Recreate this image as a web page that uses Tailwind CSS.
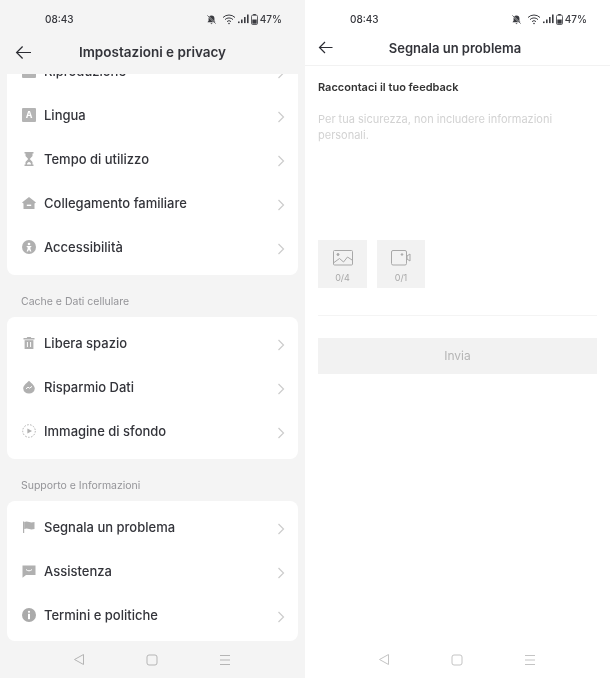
<!DOCTYPE html>
<html lang="en">
<head>
    <meta charset="UTF-8">
    <meta name="viewport" content="width=device-width, initial-scale=1.0">
    <title>Impostazioni e privacy</title>
    <script src="https://cdn.jsdelivr.net/npm/@tailwindcss/browser@4"></script>
</head>
<body class="bg-white font-['Inter',sans-serif] text-[#33343a]">
    <div class="w-[610px] h-[678px] flex overflow-hidden blur-[0.5px]">

        <!-- Settings screen -->
        <section class="w-[305px] h-full bg-[#f4f4f4] flex flex-col">
            <!-- Status bar -->
            <div class="h-[38px] pl-[45px] pr-[23px] flex items-center justify-between">
                <span class="text-[10px] font-medium text-[#33343a]">08:43</span>
                <div class="flex items-center gap-[2px] text-[#3a3b40]">
                    <svg class="w-[11px] h-[11px]" viewBox="0 0 12 12" fill="currentColor"><path d="M6 1.5a3.2 3.2 0 0 0-3.2 3.2v2.6L1.6 9h8.8L9.2 7.3V4.7A3.2 3.2 0 0 0 6 1.5zM4.8 10h2.4L6 11.2z"/><path d="M1.5 1.5l9 9" stroke="#f4f4f4" stroke-width="1.4"/><path d="M1.5 1.5l9 9" stroke="currentColor" stroke-width=".8"/></svg>
                    <svg class="w-[14px] h-[11px] ml-[3px]" viewBox="0 0 14 11" fill="none" stroke="currentColor" stroke-width="1"><path d="M1 3.5a8.5 8.5 0 0 1 12 0M3 5.6a5.6 5.6 0 0 1 8 0M5 7.6a2.8 2.8 0 0 1 4 0"/><circle cx="7" cy="9.5" r=".8" fill="currentColor" stroke="none"/></svg>
                    <svg class="w-[11px] h-[10px]" viewBox="0 0 11 10" fill="currentColor"><rect x="0" y="7.5" width="1.6" height="1.6"/><rect x="3" y="5.5" width="1.6" height="3.6"/><rect x="6" y="3" width="1.6" height="6.1"/><rect x="9" y="0.5" width="1.6" height="8.6"/></svg>
                    <svg class="w-[7px] h-[11px]" viewBox="0 0 7 11"><rect x=".5" y="1.2" width="6" height="9.3" rx="1.2" fill="none" stroke="currentColor" stroke-width=".8"/><rect x="2.2" y="0" width="2.6" height="1.2" fill="currentColor"/><rect x="1.3" y="5.5" width="4.4" height="4.2" fill="currentColor"/></svg>
                    <span class="text-[10px] font-medium">47%</span>
                </div>
            </div>
            <!-- Header -->
            <header class="h-[36px] relative flex items-center justify-center">
                <svg class="absolute left-[15px] top-[7px] w-[17px] h-[15px]" viewBox="0 0 17 15" fill="none" stroke="#2b2c33" stroke-width="1.2"><path d="M16 7.5H1.5M7.6 1.5l-6 6 6 6"/></svg>
                <h1 class="text-[13.5px] font-semibold -mt-[7px]">Impostazioni e privacy</h1>
            </header>

            <!-- Scrolled list -->
            <div class="flex-1 min-h-0 overflow-hidden px-[7px]">
                <div class="-mt-[25px] bg-white rounded-b-[8px] pb-[6px]">
                    <div class="h-[44px] pl-[15px] pr-[13px] flex items-center gap-[8px]">
                        <span class="w-[14px] h-[14px] bg-[#b4b4b4] rounded-[1px]"></span>
                        <span class="flex-1 pt-[2px] text-[13px] font-medium">Riproduzione</span>
                        <svg class="w-[8px] h-[12px] mt-[3px]" viewBox="0 0 8 12" fill="none" stroke="#cccccc" stroke-width="1.2"><path d="M1.5 1l5 5-5 5"/></svg>
                    </div>
                    <div class="h-[44px] pl-[15px] pr-[13px] flex items-center gap-[8px]">
                        <span class="w-[14px] h-[14px] flex items-center justify-center bg-[#b4b4b4] rounded-[1px] text-white text-[9px] font-bold">A</span>
                        <span class="flex-1 pt-[2px] text-[13px] font-medium">Lingua</span>
                        <svg class="w-[8px] h-[12px] mt-[3px]" viewBox="0 0 8 12" fill="none" stroke="#cccccc" stroke-width="1.2"><path d="M1.5 1l5 5-5 5"/></svg>
                    </div>
                    <div class="h-[44px] pl-[15px] pr-[13px] flex items-center gap-[8px]">
                        <svg class="w-[14px] h-[14px]" viewBox="0 0 14 14" fill="#b0b0b0"><path d="M2.5 0h9v1.6h-1V4L7.8 7l2.7 3v2.4h1V14h-9v-1.6h1V10l2.7-3-2.7-3V1.6h-1z"/><path d="M5 12.4c0-1.4 1-2.3 2-2.3s2 .9 2 2.3z" fill="#fff"/></svg>
                        <span class="flex-1 pt-[2px] text-[13px] font-medium">Tempo di utilizzo</span>
                        <svg class="w-[8px] h-[12px] mt-[3px]" viewBox="0 0 8 12" fill="none" stroke="#cccccc" stroke-width="1.2"><path d="M1.5 1l5 5-5 5"/></svg>
                    </div>
                    <div class="h-[44px] pl-[15px] pr-[13px] flex items-center gap-[8px]">
                        <svg class="w-[14px] h-[14px]" viewBox="0 0 14 14" fill="#b0b0b0"><path d="M7 1l7 5.4-1.5 1V13h-11V7.4L0 6.4z"/><rect x="4.8" y="8.6" width="4.4" height="1.4" fill="#fff"/></svg>
                        <span class="flex-1 pt-[2px] text-[13px] font-medium">Collegamento familiare</span>
                        <svg class="w-[8px] h-[12px] mt-[3px]" viewBox="0 0 8 12" fill="none" stroke="#cccccc" stroke-width="1.2"><path d="M1.5 1l5 5-5 5"/></svg>
                    </div>
                    <div class="h-[44px] pl-[15px] pr-[13px] flex items-center gap-[8px]">
                        <svg class="w-[14px] h-[14px]" viewBox="0 0 14 14"><circle cx="7" cy="7" r="7" fill="#b0b0b0"/><circle cx="7" cy="4" r="1.3" fill="#fff"/><path d="M4.2 6h5.6L8.4 7.4v1.4L9.4 11.4H8L7 9.4 6 11.4H4.6L5.6 8.8V7.4z" fill="#fff"/></svg>
                        <span class="flex-1 pt-[2px] text-[13px] font-medium">Accessibilità</span>
                        <svg class="w-[8px] h-[12px] mt-[3px]" viewBox="0 0 8 12" fill="none" stroke="#cccccc" stroke-width="1.2"><path d="M1.5 1l5 5-5 5"/></svg>
                    </div>
                </div>

                <h2 class="pt-[19px] pb-[7px] pl-[14px] text-[10.5px] leading-[16px] text-[#949498]">Cache e Dati cellulare</h2>
                <div class="bg-white rounded-[8px] pt-[4px] pb-[6px]">
                    <div class="h-[44px] pl-[15px] pr-[13px] flex items-center gap-[8px]">
                        <svg class="w-[14px] h-[14px]" viewBox="0 0 14 14" fill="#b0b0b0"><path d="M1.5 2h3.2l.6-1h3.4l.6 1h3.2v1.4h-11z"/><path d="M2.6 4.2h8.8V13H2.6z"/><path d="M5.4 6v5M8.6 6v5" stroke="#fff" stroke-width="1"/></svg>
                        <span class="flex-1 pt-[2px] text-[13px] font-medium">Libera spazio</span>
                        <svg class="w-[8px] h-[12px] mt-[3px]" viewBox="0 0 8 12" fill="none" stroke="#cccccc" stroke-width="1.2"><path d="M1.5 1l5 5-5 5"/></svg>
                    </div>
                    <div class="h-[44px] pl-[15px] pr-[13px] flex items-center gap-[8px]">
                        <svg class="w-[14px] h-[14px]" viewBox="0 0 14 14"><path d="M7 .8c1 1.300 5.800 4.400 5.800 7.600A5.600 5.600 0 0 1 7 13.600a5.600 5.600 0 0 1-5.800-5.200C1.200 5.200 6 2.100 7 .8z" fill="#b0b0b0"/><path d="M4 8.800l2-1.600 1.500 1 2.500-1.800" fill="none" stroke="#fff" stroke-width="1"/></svg>
                        <span class="flex-1 pt-[2px] text-[13px] font-medium">Risparmio Dati</span>
                        <svg class="w-[8px] h-[12px] mt-[3px]" viewBox="0 0 8 12" fill="none" stroke="#cccccc" stroke-width="1.2"><path d="M1.5 1l5 5-5 5"/></svg>
                    </div>
                    <div class="h-[44px] pl-[15px] pr-[13px] flex items-center gap-[8px]">
                        <svg class="w-[14px] h-[14px]" viewBox="0 0 14 14"><circle cx="7" cy="7" r="6.300" fill="none" stroke="#b0b0b0" stroke-width="1" stroke-dasharray="1.600 1.400"/><path d="M5.400 4.400L10 7l-4.600 2.600z" fill="#b0b0b0"/></svg>
                        <span class="flex-1 pt-[2px] text-[13px] font-medium">Immagine di sfondo</span>
                        <svg class="w-[8px] h-[12px] mt-[3px]" viewBox="0 0 8 12" fill="none" stroke="#cccccc" stroke-width="1.2"><path d="M1.5 1l5 5-5 5"/></svg>
                    </div>
                </div>

                <h2 class="pt-[19px] pb-[7px] pl-[14px] text-[10.5px] leading-[16px] text-[#949498]">Supporto e Informazioni</h2>
                <div class="bg-white rounded-[8px] pt-[4px] pb-[4px]">
                    <div class="h-[44px] pl-[15px] pr-[13px] flex items-center gap-[8px]">
                        <svg class="w-[14px] h-[14px]" viewBox="0 0 14 14" fill="#b0b0b0"><path d="M1 1.500h1.200V13H1z"/><path d="M2.200 2c2-.9 3.500-.6 5 0s3 .6 5.300 0v7c-2.300.6-3.800.6-5.300 0s-3-.9-5 0z"/></svg>
                        <span class="flex-1 pt-[2px] text-[13px] font-medium">Segnala un problema</span>
                        <svg class="w-[8px] h-[12px] mt-[3px]" viewBox="0 0 8 12" fill="none" stroke="#cccccc" stroke-width="1.2"><path d="M1.5 1l5 5-5 5"/></svg>
                    </div>
                    <div class="h-[44px] pl-[15px] pr-[13px] flex items-center gap-[8px]">
                        <svg class="w-[14px] h-[14px]" viewBox="0 0 14 14"><path d="M.5 1.500h13v9.500H4l-3.500 2.800z" fill="#b0b0b0"/><path d="M4 5.500c1.600 1.800 4.400 1.800 6 0" fill="none" stroke="#fff" stroke-width="1"/></svg>
                        <span class="flex-1 pt-[2px] text-[13px] font-medium">Assistenza</span>
                        <svg class="w-[8px] h-[12px] mt-[3px]" viewBox="0 0 8 12" fill="none" stroke="#cccccc" stroke-width="1.2"><path d="M1.5 1l5 5-5 5"/></svg>
                    </div>
                    <div class="h-[44px] pl-[15px] pr-[13px] flex items-center gap-[8px]">
                        <svg class="w-[14px] h-[14px]" viewBox="0 0 14 14"><circle cx="7" cy="7" r="7" fill="#aaaaaa"/><circle cx="7" cy="3.800" r="1.100" fill="#fff"/><rect x="6" y="5.800" width="2" height="5.400" fill="#fff"/></svg>
                        <span class="flex-1 pt-[2px] text-[13px] font-medium">Termini e politiche</span>
                        <svg class="w-[8px] h-[12px] mt-[3px]" viewBox="0 0 8 12" fill="none" stroke="#cccccc" stroke-width="1.2"><path d="M1.5 1l5 5-5 5"/></svg>
                    </div>
                </div>
            </div>

            <!-- Android nav -->
            <nav class="h-[37px] shrink-0 pl-[73px] pr-[74px] flex items-center justify-between">
                <svg class="w-[12px] h-[13px]" viewBox="0 0 12 13" fill="none" stroke="#b5b5b5"><path d="M10.500 1.500v10L1.500 6.500z"/></svg>
                <svg class="w-[12px] h-[12px]" viewBox="0 0 12 12" fill="none" stroke="#b5b5b5"><rect x="1" y="1" width="10" height="10" rx="2"/></svg>
                <svg class="w-[12px] h-[12px]" viewBox="0 0 12 12" fill="none" stroke="#b5b5b5"><path d="M1 1.500h10M1 6h10M1 10.500h10"/></svg>
            </nav>
        </section>

        <!-- Report screen -->
        <section class="w-[305px] h-full bg-white flex flex-col">
            <div class="h-[38px] pl-[45px] pr-[23px] flex items-center justify-between">
                <span class="text-[10px] font-medium text-[#33343a]">08:43</span>
                <div class="flex items-center gap-[2px] text-[#3a3b40]">
                    <svg class="w-[11px] h-[11px]" viewBox="0 0 12 12" fill="currentColor"><path d="M6 1.5a3.2 3.2 0 0 0-3.2 3.2v2.6L1.6 9h8.8L9.2 7.3V4.7A3.2 3.2 0 0 0 6 1.5zM4.8 10h2.4L6 11.2z"/><path d="M1.5 1.5l9 9" stroke="#fff" stroke-width="1.4"/><path d="M1.5 1.5l9 9" stroke="currentColor" stroke-width=".8"/></svg>
                    <svg class="w-[14px] h-[11px] ml-[3px]" viewBox="0 0 14 11" fill="none" stroke="currentColor" stroke-width="1"><path d="M1 3.5a8.5 8.5 0 0 1 12 0M3 5.6a5.6 5.6 0 0 1 8 0M5 7.6a2.8 2.8 0 0 1 4 0"/><circle cx="7" cy="9.5" r=".8" fill="currentColor" stroke="none"/></svg>
                    <svg class="w-[11px] h-[10px]" viewBox="0 0 11 10" fill="currentColor"><rect x="0" y="7.5" width="1.6" height="1.6"/><rect x="3" y="5.5" width="1.6" height="3.6"/><rect x="6" y="3" width="1.6" height="6.1"/><rect x="9" y="0.5" width="1.6" height="8.6"/></svg>
                    <svg class="w-[7px] h-[11px]" viewBox="0 0 7 11"><rect x=".5" y="1.2" width="6" height="9.3" rx="1.2" fill="none" stroke="currentColor" stroke-width=".8"/><rect x="2.2" y="0" width="2.6" height="1.2" fill="currentColor"/><rect x="1.3" y="5.5" width="4.4" height="4.2" fill="currentColor"/></svg>
                    <span class="text-[10px] font-medium">47%</span>
                </div>
            </div>
            <header class="h-[28px] relative flex items-center justify-center border-b border-[#f2f2f2] pr-[5px]">
                <svg class="absolute left-[13px] top-[2px] w-[15px] h-[15px]" viewBox="0 0 15 15" fill="none" stroke="#2b2c33" stroke-width="1.2"><path d="M14.500 7.500H1.500M7 2l-5.500 5.500L7 13"/></svg>
                <h1 class="text-[13px] font-semibold -mt-[6px]">Segnala un problema</h1>
            </header>

            <div class="flex-1 min-h-0 px-[13px]">
                <h2 class="pt-[14px] text-[11px] leading-[14px] font-semibold text-[#333]">Raccontaci il tuo feedback</h2>
                <p class="mt-[17px] h-[129px] w-[270px] text-[11px] leading-[16px] text-[#d2d2d2]">Per tua sicurezza, non includere informazioni personali.</p>
                <div class="flex gap-[10px]">
                    <div class="w-[49px] h-[48px] bg-[#f2f2f2] flex flex-col items-center pt-[10px]">
                        <svg class="w-[20px] h-[16px]" viewBox="0 0 20 16" fill="none" stroke="#a8a8a8"><rect x=".5" y=".5" width="19" height="14.500" rx="1"/><circle cx="5" cy="4.500" r="1" fill="#a8a8a8"/><path d="M1 12.500l5.500-4 4 3.500 4-5L19 10"/></svg>
                        <span class="mt-[6px] text-[9px] leading-[12px] text-[#a8a8a8]">0/4</span>
                    </div>
                    <div class="w-[48px] h-[48px] bg-[#f2f2f2] flex flex-col items-center pt-[10px]">
                        <svg class="w-[20px] h-[16px]" viewBox="0 0 20 16" fill="none" stroke="#a8a8a8"><rect x=".5" y=".5" width="15" height="14.500" rx="1.500"/><circle cx="11" cy="4.500" r=".8" fill="#a8a8a8"/><path d="M16 6l3-2v7l-3-2z"/></svg>
                        <span class="mt-[6px] text-[9px] leading-[12px] text-[#a8a8a8]">0/1</span>
                    </div>
                </div>
                <div class="mt-[27px] border-t border-[#f4f4f4]"></div>
                <button class="mt-[22px] w-[279px] h-[36px] bg-[#f2f2f2] text-[12px] text-[#b5b5b5]">Invia</button>
            </div>

            <nav class="h-[37px] shrink-0 pl-[73px] pr-[74px] flex items-center justify-between">
                <svg class="w-[12px] h-[13px]" viewBox="0 0 12 13" fill="none" stroke="#c4c4c4"><path d="M10.500 1.500v10L1.500 6.500z"/></svg>
                <svg class="w-[12px] h-[12px]" viewBox="0 0 12 12" fill="none" stroke="#c4c4c4"><rect x="1" y="1" width="10" height="10" rx="2"/></svg>
                <svg class="w-[12px] h-[12px]" viewBox="0 0 12 12" fill="none" stroke="#c4c4c4"><path d="M1 1.500h10M1 6h10M1 10.500h10"/></svg>
            </nav>
        </section>
    </div>
</body>
</html>
